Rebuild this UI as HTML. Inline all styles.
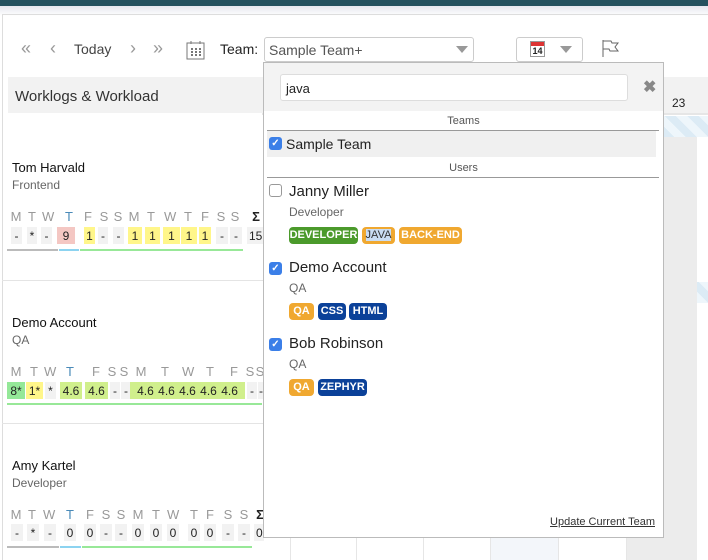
<!DOCTYPE html>
<html><head><meta charset="utf-8"><style>
*{box-sizing:border-box;margin:0;padding:0}
body{width:708px;height:560px;overflow:hidden;background:#fff;font-family:"Liberation Sans",sans-serif;position:relative;color:#222}
.a{position:absolute;white-space:nowrap}
.bar{left:0;top:0;width:708px;height:6px;background:#24525e}
.shadow{left:0;top:6px;width:708px;height:10px;background:linear-gradient(#e6e8ee,#fff)}
.card{left:2px;top:14px;width:706px;height:546px;border-left:1px solid #ddd;border-top:1px solid #ddd}
.nav{color:#999;font-size:18px;top:38px}
.tb{font-size:14px;color:#444;top:41px}
.sel{left:264px;top:37px;width:210px;height:25px;border:1px solid #ccc;border-radius:3px;font-size:14px;color:#555;padding:4px 0 0 4px}
.tri{width:0;height:0;border-left:6px solid transparent;border-right:6px solid transparent;border-top:7px solid #999}
.hdr{left:8px;top:77px;width:254px;height:36px;background:#f2f2f2;font-size:15px;color:#333;padding:11px 0 0 7px}
.name{font-size:13px;color:#111}
.role{font-size:12px;color:#666}
.L{position:absolute;font-size:13px;color:#999;width:12px;text-align:center}
.L.t{color:#4a8ab8}
.v{position:absolute;font-size:12px;height:17px;text-align:center;background:#f2f2f2;padding-top:2px}
.y{background:#fff68a}.gr{background:#d0ef8c}
.dd{left:263px;top:62px;width:401px;height:476px;border:1px solid #bbb;background:#fff}
.ck{width:13px;height:13px;border-radius:3px;background:#3b7fe8;color:#fff;font-size:10px;text-align:center;line-height:13px;font-weight:bold}
.ucb{width:13px;height:13px;border-radius:3px;border:1px solid #999;background:#fff}
.tag{height:17px;border-radius:4px;color:#fff;font-size:11px;font-weight:bold;text-align:center;padding-top:2px;top:0}
.g{background:#4b9a2b}.o{background:#f0a830}.b{background:#0b4199}
.col{top:113px;height:447px;border-left:1px solid #e6e6e6}
</style></head><body>
<div class="a bar"></div><div class="a shadow"></div><div class="a card"></div>

<div class="a nav" style="left:21px">«</div>
<div class="a nav" style="left:50px">‹</div>
<div class="a tb" style="left:74px">Today</div>
<div class="a nav" style="left:130px">›</div>
<div class="a nav" style="left:153px">»</div>
<svg class="a" style="left:186px;top:40px" width="19" height="20" viewBox="0 0 19 20"><rect x="1" y="3" width="17" height="16" fill="none" stroke="#777"/><line x1="5" y1="1" x2="5" y2="4" stroke="#777"/><line x1="14" y1="1" x2="14" y2="4" stroke="#777"/><g fill="#777"><rect x="5" y="8" width="2" height="2"/><rect x="9" y="8" width="2" height="2"/><rect x="13" y="8" width="2" height="2"/><rect x="5" y="11" width="2" height="2"/><rect x="9" y="11" width="2" height="2"/><rect x="13" y="11" width="2" height="2"/><rect x="5" y="14" width="2" height="2"/><rect x="9" y="14" width="2" height="2"/><rect x="13" y="14" width="2" height="2"/></g></svg>
<div class="a tb" style="left:220px;color:#222">Team:</div>
<div class="a sel">Sample Team+</div>
<div class="a tri" style="left:456px;top:46px"></div>
<div class="a" style="left:516px;top:37px;width:67px;height:25px;border:1px solid #ccc;border-radius:3px"></div>
<div class="a" style="left:530px;top:41px;width:15px;height:16px;border:1px solid #999;background:#fff"><div style="height:4px;background:#d33"></div><div style="font-size:9px;font-weight:bold;text-align:center;line-height:10px">14</div></div>
<div class="a tri" style="left:560px;top:46px"></div>
<svg class="a" style="left:601px;top:39px" width="19" height="19" viewBox="0 0 19 19"><path d="M2 1V18M2 2H10L11 4H17L14 8L17 12H9L8 10H2" fill="none" stroke="#666"/></svg>

<div class="a hdr">Worklogs &amp; Workload</div>
<div class="a" style="left:262px;top:77px;width:446px;height:36px;background:#f2f2f2"></div>
<div class="a" style="left:672px;top:96px;font-size:12px;color:#222">23</div>
<div class="a" style="left:262px;top:113px;width:446px;height:2px;background:#e6e6e6"></div>
<div class="a" style="left:663px;top:116px;width:45px;height:21px;background:repeating-linear-gradient(45deg,#dcebf5 0 8px,#eef6fb 8px 16px)"></div>
<div class="a" style="left:663px;top:282px;width:45px;height:21px;background:repeating-linear-gradient(45deg,#dcebf5 0 8px,#eef6fb 8px 16px)"></div>
<div class="a" style="left:663px;top:137px;width:34px;height:423px;background:#ececec"></div>
<div class="a" style="left:627px;top:430px;width:36px;height:130px;background:#ececec"></div>
<div class="a" style="left:491px;top:430px;width:67px;height:130px;background:#f3f6fa"></div>
<div class="a col" style="left:290px"></div><div class="a col" style="left:356px"></div><div class="a col" style="left:423px"></div><div class="a col" style="left:490px"></div><div class="a col" style="left:558px"></div><div class="a col" style="left:626px"></div>

<div class="a" style="left:2px;top:280px;width:288px;height:1px;background:#e4e4e4"></div>
<div class="a" style="left:2px;top:423px;width:288px;height:1px;background:#e4e4e4"></div>

<!-- Tom -->
<div class="a name" style="left:12px;top:160px">Tom Harvald</div>
<div class="a role" style="left:12px;top:178px">Frontend</div>
<div class="a" style="left:0;top:209px;width:290px;height:14px">
<span class="L" style="left:10px">M</span><span class="L" style="left:26px">T</span><span class="L" style="left:42px">W</span><span class="L t" style="left:63px">T</span><span class="L" style="left:82px">F</span><span class="L" style="left:98px">S</span><span class="L" style="left:112px">S</span><span class="L" style="left:128px">M</span><span class="L" style="left:145px">T</span><span class="L" style="left:164px">W</span><span class="L" style="left:182px">T</span><span class="L" style="left:199px">F</span><span class="L" style="left:215px">S</span><span class="L" style="left:229px">S</span><span class="L" style="left:250px;color:#222;font-weight:bold">Σ</span></div>
<div class="a" style="left:0;top:227px;width:290px;height:17px">
<span class="v" style="left:11px;width:11px">-</span><span class="v" style="left:27px;width:10px">*</span><span class="v" style="left:41px;width:11px">-</span><span class="v" style="left:57px;width:18px;background:#f4c7c3">9</span><span class="v y" style="left:84px;width:11px">1</span><span class="v" style="left:98px;width:10px">-</span><span class="v" style="left:113px;width:11px">-</span><span class="v y" style="left:128px;width:14px">1</span><span class="v y" style="left:145px;width:15px">1</span><span class="v y" style="left:163px;width:17px">1</span><span class="v y" style="left:181px;width:16px">1</span><span class="v y" style="left:199px;width:12px">1</span><span class="v" style="left:216px;width:12px">-</span><span class="v" style="left:230px;width:12px">-</span><span class="v" style="left:247px;width:16px;text-align:left;padding-left:2px">15</span></div>
<div class="a" style="left:7px;top:249px;width:51px;height:2px;background:#bbb"></div><div class="a" style="left:59px;top:249px;width:20px;height:2px;background:#8cd3f0"></div><div class="a" style="left:80px;top:249px;width:163px;height:2px;background:#98e898"></div>

<!-- Demo -->
<div class="a name" style="left:12px;top:315px">Demo Account</div>
<div class="a role" style="left:12px;top:333px">QA</div>
<div class="a" style="left:0;top:364px;width:290px;height:14px">
<span class="L" style="left:10px">M</span><span class="L" style="left:28px">T</span><span class="L" style="left:44px">W</span><span class="L t" style="left:64px">T</span><span class="L" style="left:90px">F</span><span class="L" style="left:106px">S</span><span class="L" style="left:118px">S</span><span class="L" style="left:135px">M</span><span class="L" style="left:159px">T</span><span class="L" style="left:182px">W</span><span class="L" style="left:204px">T</span><span class="L" style="left:228px">F</span><span class="L" style="left:244px">S</span><span class="L" style="left:254px">S</span></div>
<div class="a" style="left:0;top:382px;width:290px;height:17px">
<span class="v" style="left:7px;width:18px;background:#94e898">8*</span><span class="v y" style="left:26px;width:17px">1*</span><span class="v" style="left:45px;width:11px">*</span><span class="v gr" style="left:60px;width:22px">4.6</span><span class="v gr" style="left:85px;width:23px">4.6</span><span class="v" style="left:110px;width:10px">-</span><span class="v" style="left:121px;width:10px">-</span><span class="v gr" style="left:130px;width:115px;word-spacing:1px">4.6 4.6 4.6 4.6 4.6</span><span class="v" style="left:247px;width:10px">-</span><span class="v" style="left:258px;width:6px">-</span></div>
<div class="a" style="left:7px;top:403px;width:255px;height:2px;background:#98e898"></div>

<!-- Amy -->
<div class="a name" style="left:12px;top:458px">Amy Kartel</div>
<div class="a role" style="left:12px;top:476px">Developer</div>
<div class="a" style="left:0;top:507px;width:290px;height:14px">
<span class="L" style="left:10px">M</span><span class="L" style="left:26px">T</span><span class="L" style="left:43px">W</span><span class="L t" style="left:64px">T</span><span class="L" style="left:84px">F</span><span class="L" style="left:100px">S</span><span class="L" style="left:115px">S</span><span class="L" style="left:132px">M</span><span class="L" style="left:150px">T</span><span class="L" style="left:167px">W</span><span class="L" style="left:188px">T</span><span class="L" style="left:204px">F</span><span class="L" style="left:222px">S</span><span class="L" style="left:238px">S</span><span class="L" style="left:254px;color:#222;font-weight:bold">Σ</span></div>
<div class="a" style="left:0;top:524px;width:290px;height:17px">
<span class="v" style="left:11px;width:12px">-</span><span class="v" style="left:27px;width:12px">*</span><span class="v" style="left:44px;width:12px">-</span><span class="v" style="left:64px;width:12px">0</span><span class="v" style="left:84px;width:12px">0</span><span class="v" style="left:100px;width:12px">-</span><span class="v" style="left:115px;width:12px">-</span><span class="v" style="left:132px;width:12px">0</span><span class="v" style="left:150px;width:12px">0</span><span class="v" style="left:167px;width:12px">0</span><span class="v" style="left:188px;width:12px">0</span><span class="v" style="left:204px;width:12px">0</span><span class="v" style="left:222px;width:12px">-</span><span class="v" style="left:238px;width:12px">-</span><span class="v" style="left:254px;width:10px;text-align:left;padding-left:2px">0</span></div>
<div class="a" style="left:7px;top:546px;width:52px;height:2px;background:#bbb"></div><div class="a" style="left:60px;top:546px;width:21px;height:2px;background:#8cd3f0"></div><div class="a" style="left:82px;top:546px;width:170px;height:2px;background:#98e898"></div>

<!-- dropdown -->
<div class="a dd">
 <div class="a" style="left:0;top:0;width:399px;height:48px;background:#f3f3f3"></div>
 <div class="a" style="left:16px;top:11px;width:348px;height:27px;border:1px solid #ddd;border-radius:3px;background:#fff;font-size:13px;padding:6px 0 0 5px">java</div>
 <div class="a" style="left:379px;top:14px;font-size:16px;color:#888;font-weight:bold">✖</div>
 <div class="a" style="left:0;top:52px;width:399px;text-align:center;font-size:11px;color:#555">Teams</div>
 <div class="a" style="left:3px;top:67px;width:392px;height:1px;background:#999"></div>
 <div class="a" style="left:3px;top:68px;width:389px;height:26px;background:#f0f0f0"></div>
 <div class="a ck" style="left:5px;top:74px">✓</div>
 <div class="a" style="left:22px;top:73px;font-size:14px;color:#222">Sample Team</div>
 <div class="a" style="left:0;top:99px;width:399px;text-align:center;font-size:11px;color:#555">Users</div>
 <div class="a" style="left:3px;top:114px;width:392px;height:1px;background:#999"></div>

 <div class="a ucb" style="left:5px;top:121px"></div>
 <div class="a" style="left:25px;top:120px;font-size:15px;color:#222">Janny Miller</div>
 <div class="a role" style="left:25px;top:142px">Developer</div>
 <div class="a" style="left:25px;top:164px;height:17px;width:300px"><span class="a tag g" style="left:0;width:69px">DEVELOPER</span><span class="a tag o" style="left:73px;width:33px;font-weight:normal"><span style="background:#c9dcf2;color:#333">JAVA</span></span><span class="a tag o" style="left:110px;width:63px">BACK-END</span></div>

 <div class="a ck" style="left:5px;top:199px">✓</div>
 <div class="a" style="left:25px;top:196px;font-size:15px;color:#222">Demo Account</div>
 <div class="a role" style="left:25px;top:218px">QA</div>
 <div class="a" style="left:25px;top:240px;height:17px;width:300px"><span class="a tag o" style="left:0;width:25px">QA</span><span class="a tag b" style="left:29px;width:28px">CSS</span><span class="a tag b" style="left:60px;width:38px">HTML</span></div>

 <div class="a ck" style="left:5px;top:275px">✓</div>
 <div class="a" style="left:25px;top:272px;font-size:15px;color:#222">Bob Robinson</div>
 <div class="a role" style="left:25px;top:294px">QA</div>
 <div class="a" style="left:25px;top:316px;height:17px;width:300px"><span class="a tag o" style="left:0;width:25px">QA</span><span class="a tag b" style="left:29px;width:49px">ZEPHYR</span></div>

 <div class="a" style="right:8px;top:453px;font-size:11px;color:#333;text-decoration:underline">Update Current Team</div>
</div>
</body></html>
